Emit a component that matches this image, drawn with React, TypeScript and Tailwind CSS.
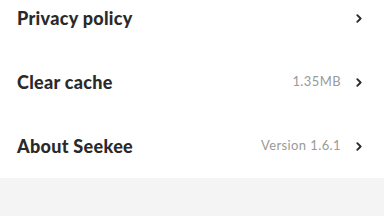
import React from "react";

const Chevron = () => (
  <svg width="6" height="9" viewBox="0 0 6 9" className="shrink-0">
    <path d="M1.3 1.2 L4.6 4.5 L1.3 7.8" fill="none" stroke="#2b2b2b" strokeWidth="1.9" strokeLinecap="round" strokeLinejoin="round" />
  </svg>
);

const Row = ({ label, value }: { label: string; value?: string }) => (
  <div className="h-16 flex items-center pl-[17px] pr-[22px]">
    <span className="flex-1 text-[18px] font-black text-[#2a2a2a] tracking-[0.3px]">{label}</span>
    {value && <span className="text-[13px] text-[#9a9a9a] tracking-[0.4px] mr-[15px]">{value}</span>}
    <Chevron />
  </div>
);

export default function App() {
  return (
    <div className="w-[384px] h-[216px] overflow-hidden bg-[#f4f4f4]" style={{ fontFamily: "Lato, 'Noto Sans', sans-serif" }}>
      <div className="-mt-[14px] bg-white flex flex-col">
        <Row label="Privacy policy" />
        <Row label="Clear cache" value="1.35MB" />
        <Row label="About Seekee" value="Version 1.6.1" />
      </div>
    </div>
  );
}
